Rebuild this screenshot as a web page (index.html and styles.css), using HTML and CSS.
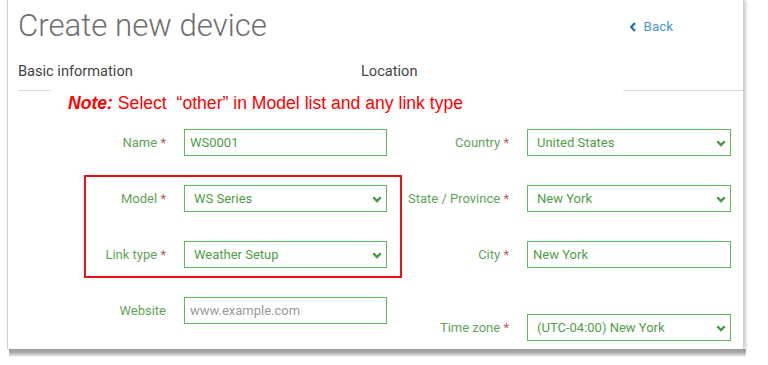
FILE: index.html
```html
<!DOCTYPE html>
<html lang="en">
<head>
<meta charset="utf-8">
<title>Create new device</title>
<link rel="stylesheet" href="styles.css">
</head>
<body>
<div class="card">
  <div class="header">
    <h1 class="title">Create new device</h1>
    <a class="back" href="#"><svg class="back-icon" width="8" height="10" viewBox="0 0 8 10"><path d="M6 1 L2.2 5 L6 9" fill="none" stroke="#1e74bd" stroke-width="2.4"/></svg><span>Back</span></a>
  </div>
  <div class="tabs">
    <div class="tab tab-first">Basic information</div>
    <div class="tab">Location</div>
  </div>
  <div class="tab-lines"><span class="seg seg-left"></span><span class="seg seg-right"></span></div>
  <p class="note"><b><i>Note:</i></b> Select&nbsp; “other” in Model list and any link type</p>
  <div class="form">
    <div class="col col-left">
      <div class="row">
        <label class="label">Name <span class="req">*</span></label>
        <div class="field"><input class="input" type="text" value="WS0001"></div>
      </div>
      <div class="highlight">
        <div class="row">
          <label class="label">Model <span class="req">*</span></label>
          <div class="field select"><span class="select-text">WS Series</span><svg class="chev" width="10" height="7" viewBox="0 0 10 7"><path d="M1.3 1.3 L5 5 L8.7 1.3" fill="none" stroke="#3f9a3f" stroke-width="2.3"/></svg></div>
        </div>
        <div class="row">
          <label class="label">Link type <span class="req">*</span></label>
          <div class="field select"><span class="select-text">Weather Setup</span><svg class="chev" width="10" height="7" viewBox="0 0 10 7"><path d="M1.3 1.3 L5 5 L8.7 1.3" fill="none" stroke="#3f9a3f" stroke-width="2.3"/></svg></div>
        </div>
      </div>
      <div class="row">
        <label class="label">Website</label>
        <div class="field"><input class="input" type="text" placeholder="www.example.com"></div>
      </div>
    </div>
    <div class="col col-right">
      <div class="row">
        <label class="label">Country <span class="req">*</span></label>
        <div class="field select"><span class="select-text">United States</span><svg class="chev" width="10" height="7" viewBox="0 0 10 7"><path d="M1.3 1.3 L5 5 L8.7 1.3" fill="none" stroke="#3f9a3f" stroke-width="2.3"/></svg></div>
      </div>
      <div class="row">
        <label class="label">State / Province <span class="req">*</span></label>
        <div class="field select"><span class="select-text">New York</span><svg class="chev" width="10" height="7" viewBox="0 0 10 7"><path d="M1.3 1.3 L5 5 L8.7 1.3" fill="none" stroke="#3f9a3f" stroke-width="2.3"/></svg></div>
      </div>
      <div class="row">
        <label class="label">City <span class="req">*</span></label>
        <div class="field"><input class="input" type="text" value="New York"></div>
      </div>
      <div class="row row-tz">
        <label class="label">Time zone <span class="req">*</span></label>
        <div class="field select"><span class="select-text">(UTC-04:00) New York</span><svg class="chev" width="10" height="7" viewBox="0 0 10 7"><path d="M1.3 1.3 L5 5 L8.7 1.3" fill="none" stroke="#3f9a3f" stroke-width="2.3"/></svg></div>
      </div>
    </div>
  </div>
</div>
<div class="card-shadow"></div>
</body>
</html>
```
FILE: styles.css
```css
* { box-sizing: border-box; }
html, body { margin: 0; padding: 0; background: #fff; }
body { font-family: Roboto, "Liberation Sans", sans-serif; }

.card {
  margin-left: 7px;
  width: 737px;
  height: 349px;
  background: #fff;
  border-left: 1px solid #cfcfcf;
  border-right: 1px solid #cfcfcf;
  padding: 0 0 0 10px;
  box-shadow: 2px 0 3px rgba(0, 0, 0, 0.2);
}
.card-shadow {
  margin-left: 9px;
  width: 737px;
  height: 8px;
  background: linear-gradient(to bottom, #9a9a9a 0%, #a8a8a8 40%, #d6d6d6 80%, #ffffff 100%);
}

.header {
  display: flex;
  justify-content: space-between;
  align-items: flex-start;
  padding-top: 8px;
  padding-right: 70px;
}
.title {
  margin: 0;
  font-size: 31.2px;
  line-height: 36px;
  font-weight: 300;
  color: #6e6e6e;
}
.back {
  margin-top: 11px;
  display: flex;
  align-items: center;
  gap: 7px;
  font-size: 13.4px;
  line-height: 16px;
  color: #4b94cf;
  text-decoration: none;
}
.back-icon { display: block; }

.tabs {
  display: flex;
  margin-top: 19px;
  font-size: 14.6px;
  line-height: 16px;
  color: #444;
}
.tab-first { width: 343px; }

.tab-lines {
  display: flex;
  justify-content: space-between;
  margin-top: 11px;
  height: 1px;
}
.seg { display: block; height: 1px; background: #dcdcdc; }
.seg-left { width: 33px; }
.seg-right { width: 120px; }

.note {
  margin: 2px 0 0 50px;
  font-family: "Liberation Sans", Arial, sans-serif;
  font-size: 17.6px;
  line-height: 20px;
  color: #ff0000;
}

.form {
  display: flex;
  margin-top: 16px;
}
.col {
  display: flex;
  flex-direction: column;
  gap: 29px;
}
.col-left { width: 369px; }
.col-right { margin-left: 13px; }

.highlight {
  position: relative;
  display: flex;
  flex-direction: column;
  gap: 29px;
}
.highlight::before {
  content: "";
  position: absolute;
  left: 66px;
  right: -15px;
  top: -10px;
  bottom: -10px;
  border: 2px solid #e8141a;
  pointer-events: none;
}

.row {
  display: flex;
  align-items: center;
  gap: 18px;
  height: 27px;
}
.col-left .label { width: 148px; }
.col-right .label { width: 109px; }
.row-tz { margin-top: 17px; }

.label {
  text-align: right;
  white-space: nowrap;
  font-size: 13px;
  color: #62a35a;
}
.req { color: #c55a5a; }

.field {
  position: relative;
  width: 203px;
  height: 27px;
  border: 1px solid #5cb85c;
  font-size: 13px;
  line-height: 25px;
  color: #4f9e48;
}
.col-right .field { width: 204px; }

.input {
  display: block;
  width: 100%;
  height: 25px;
  border: 0;
  outline: 0;
  padding: 0 0 0 5px;
  margin: 0;
  font-family: Roboto, "Liberation Sans", sans-serif;
  font-size: 13px;
  color: #4f9e48;
  background: transparent;
}
.input::placeholder { color: #9a9a9a; }

.select { padding-left: 9px; }
.select-text { white-space: nowrap; }
.chev {
  position: absolute;
  right: 4px;
  top: 10px;
  display: block;
}
```
